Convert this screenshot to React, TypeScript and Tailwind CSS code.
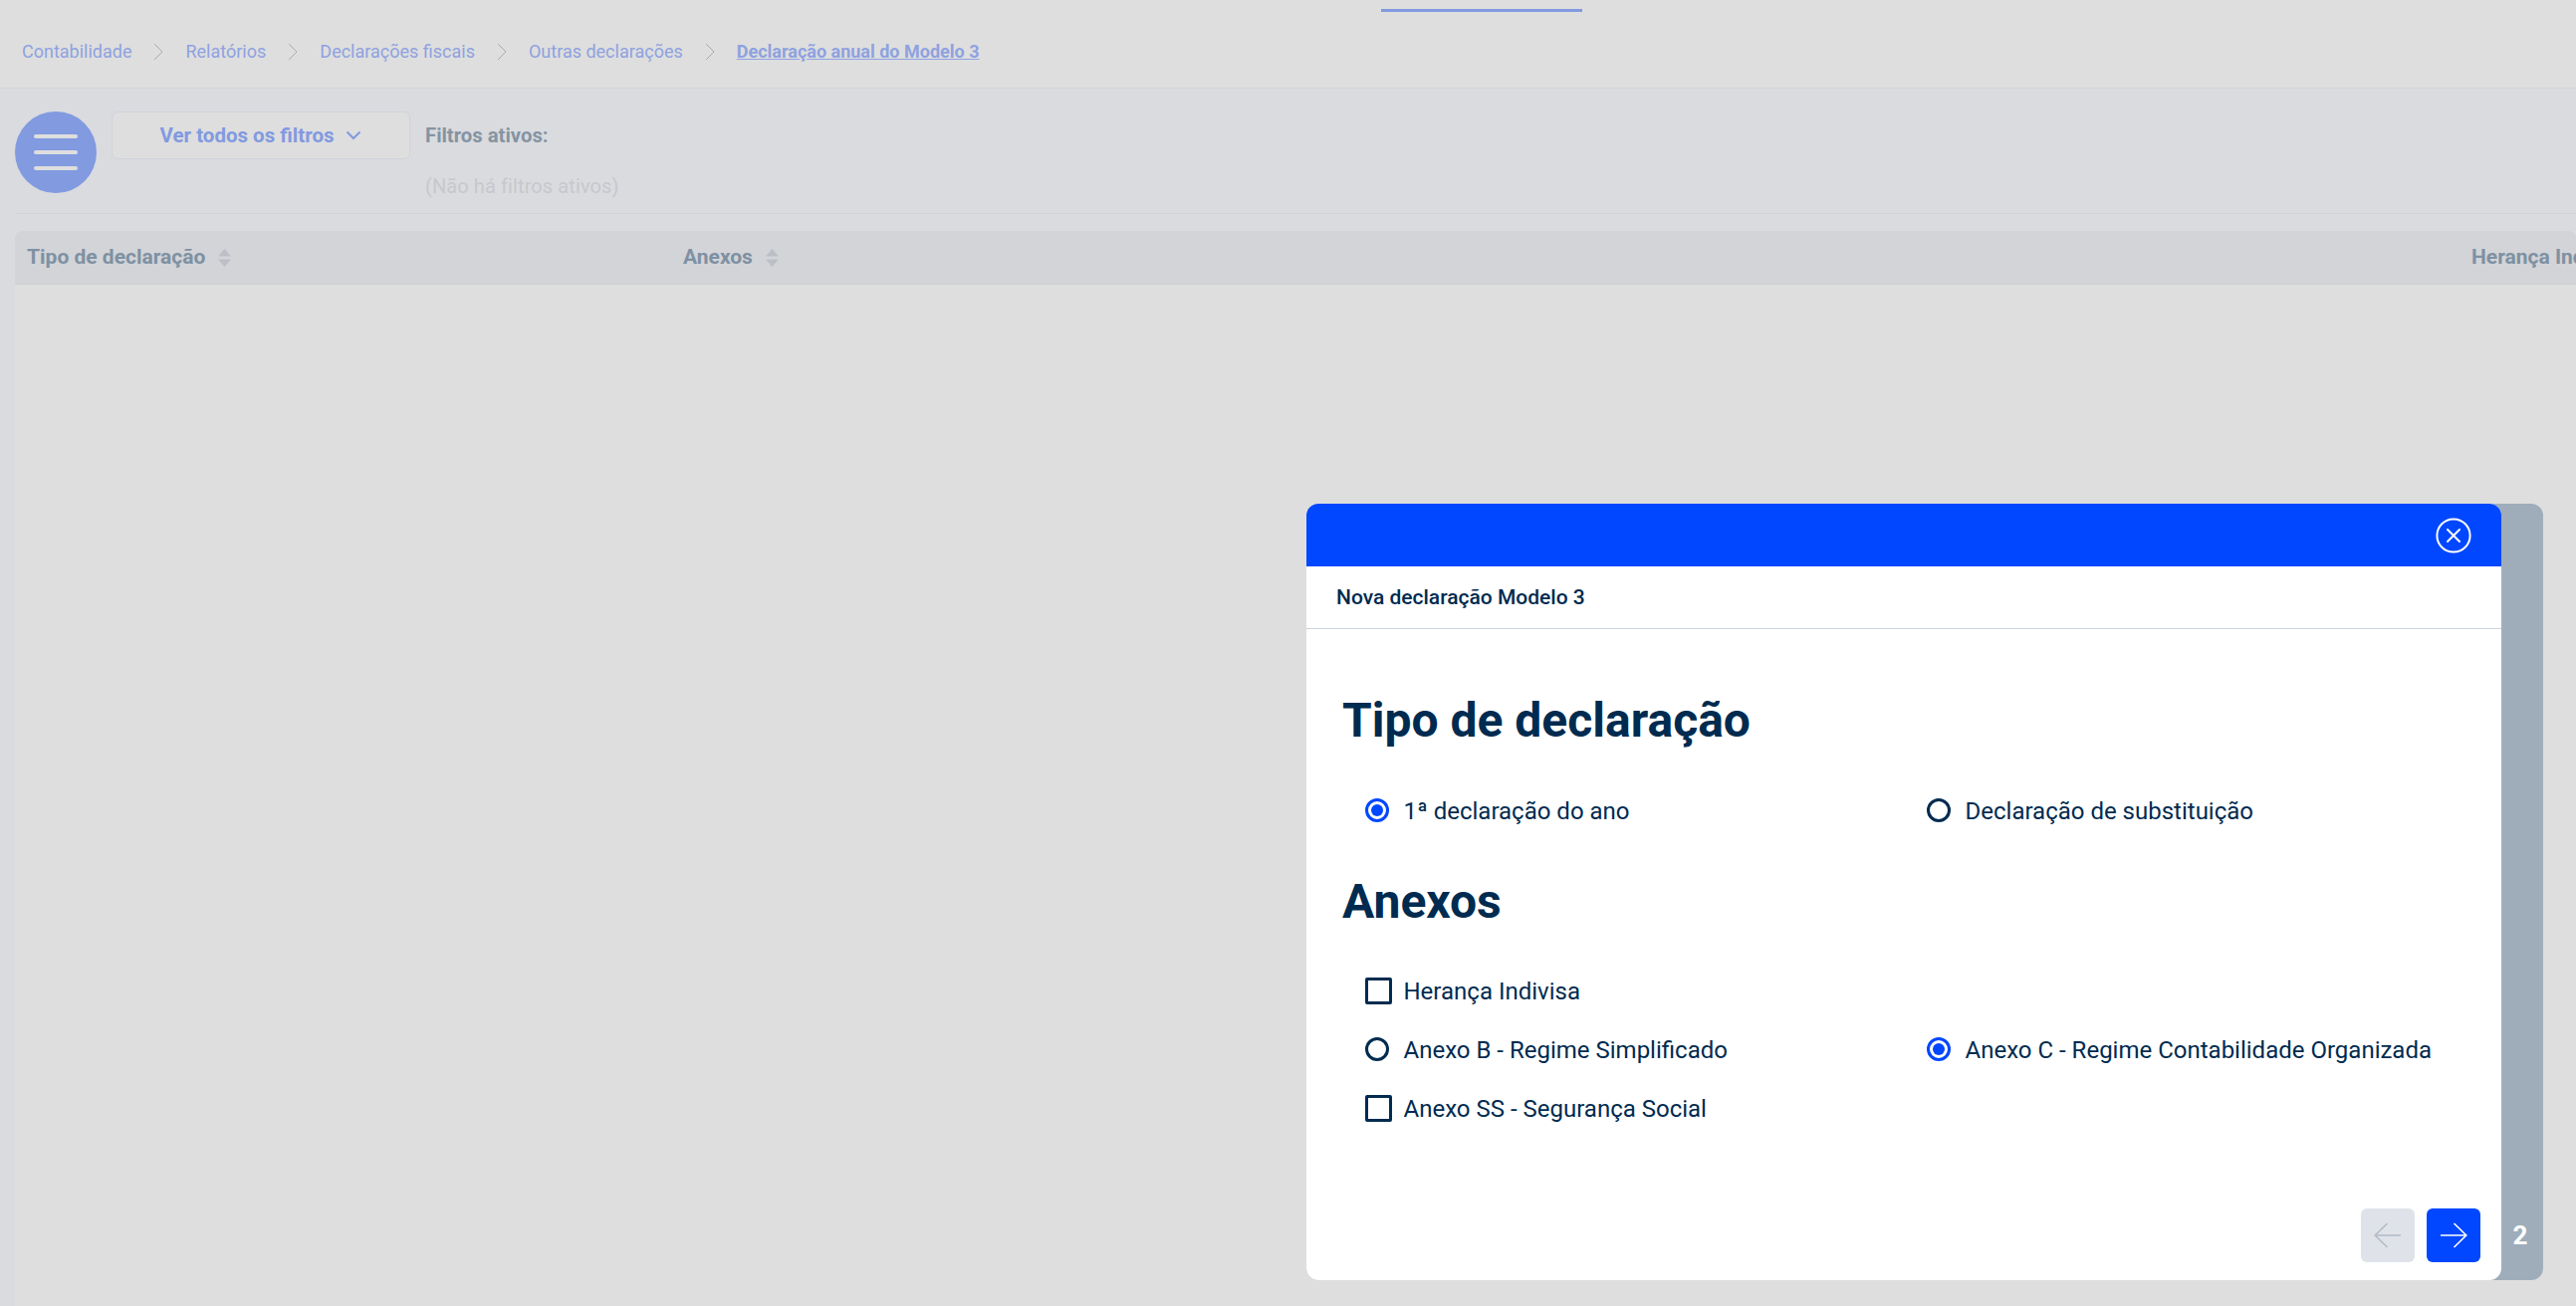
import React from "react";

const crumbs = ["Contabilidade", "Relatórios", "Declarações fiscais", "Outras declarações"];

const CrumbChevron = () => (
  <svg width="10" height="18" viewBox="0 0 10 18" fill="none" stroke="#a9abb0" strokeWidth="1" className="mx-[22px]">
    <path d="M1 1l8 8-8 8" />
  </svg>
);

const SortIcon = () => (
  <svg width="13" height="18" viewBox="0 0 13 18" fill="#bcbfc5" className="ml-[13px]">
    <path d="M6.5 0L13 7.5H0z" />
    <path d="M6.5 18L0 10.5h13z" />
  </svg>
);

const Radio = ({ checked }: { checked?: boolean }) => (
  <span
    className={`flex w-6 h-6 items-center justify-center rounded-full border-[3px] ${
      checked ? "border-[#0047ff]" : "border-[#002b50]"
    }`}
  >
    {checked && <span className="w-3 h-3 rounded-full bg-[#0047ff]" />}
  </span>
);

const Option = ({ label, type, checked }: { label: string; type: "radio" | "check"; checked?: boolean }) => (
  <div className="flex items-center h-[30px] w-[564px]">
    <span className="w-[38.5px] shrink-0">
      {type === "radio" ? (
        <Radio checked={checked} />
      ) : (
        <span className="block w-[27px] h-[27px] rounded-[2px] border-[3px] border-[#002b50]" />
      )}
    </span>
    <span className="text-2xl leading-[30px] pt-px text-[#002b50]">{label}</span>
  </div>
);

const Arrow = ({ left, color }: { left?: boolean; color: string }) => (
  <svg width="28" height="26" viewBox="0 0 28 26" fill="none" stroke={color} strokeWidth="1.6" className={left ? "rotate-180" : ""}>
    <path d="M1 13h26M14.5 1l12.3 12-12.3 12" />
  </svg>
);

export default function App() {
  return (
    <div className="relative flex flex-col h-[1312px] overflow-hidden bg-[#dadbdf] font-['Roboto',sans-serif]">
      <div className="h-[13px] pt-[9px] pl-[1387px] bg-[#dedede] shadow-[0_1px_2px_rgba(0,0,0,0.06)]">
        <div className="w-[202px] h-[3px] bg-[#819ae0]" />
      </div>

      <div className="flex items-center h-[76px] pl-[22px] pt-[2px] bg-[#dedede] border-b border-[#d2d4d8] text-lg text-[#8ea2e0]">
        {crumbs.map((c) => (
          <React.Fragment key={c}>
            <span>{c}</span>
            <CrumbChevron />
          </React.Fragment>
        ))}
        <span className="font-bold underline">Declaração anual do Modelo 3</span>
      </div>

      <div className="ml-[15px] pt-[23px] pb-[15px] flex border-b border-[#d0d2d6]">
        <div className="flex flex-col items-center justify-center gap-3 w-[82px] h-[82px] rounded-full bg-[#819ae0]">
          <span className="w-11 h-1 rounded-sm bg-[#dedede]" />
          <span className="w-11 h-1 rounded-sm bg-[#dedede]" />
          <span className="w-11 h-1 rounded-sm bg-[#dedede]" />
        </div>
        <div className="ml-[15px] flex items-center justify-center w-[300px] h-12 rounded-md border border-[#cfd3d9] bg-[#dedede]">
          <span className="text-[20.5px] font-bold text-[#819ae0]">Ver todos os filtros</span>
          <svg width="16" height="10" viewBox="0 0 16 10" fill="none" stroke="#819ae0" strokeWidth="2" className="ml-[12px]">
            <path d="M1.5 1.5L8 8l6.5-6.5" />
          </svg>
        </div>
        <div className="ml-[15px] pt-3">
          <div className="text-[20.3px] leading-6 font-bold text-[#8494a3]">Filtros ativos:</div>
          <div className="mt-[27px] text-xl leading-6 tracking-[0.1px] text-[#c7c8cc]">(Não há filtros ativos)</div>
        </div>
      </div>

      <div className="ml-[15px] mt-[17px] flex-1 flex flex-col bg-[#dedede]">
        <div className="flex items-center h-[54px] shrink-0 rounded-t-md bg-[#d3d4d8] border-b border-[#cdced2] text-[21px] font-bold text-[#7e91a3] whitespace-nowrap">
          <div className="flex items-center w-[659px] shrink-0 pl-3">
            Tipo de declaração
            <SortIcon />
          </div>
          <div className="flex items-center w-[1796px] shrink-0 pl-3">
            Anexos
            <SortIcon />
          </div>
          <div className="shrink-0 pl-3">Herança Indivisa</div>
        </div>
      </div>

      <div className="absolute left-[1312px] top-[506px] flex w-[1242px] h-[780px] rounded-xl bg-[#9fadbb]">
        <div className="flex flex-col w-[1200px] rounded-xl bg-white overflow-hidden">
          <div className="flex items-center justify-end h-[63px] pr-[30px] bg-[#0047ff]">
            <svg width="36" height="36" viewBox="0 0 36 36" fill="none" stroke="#fff" strokeWidth="2">
              <circle cx="18" cy="18" r="16.6" />
              <path d="M12 12l12 12M24 12L12 24" strokeLinecap="round" />
            </svg>
          </div>
          <div className="flex items-center h-[63px] pl-[30px] pt-px border-b border-[#ccd3db] text-[21px] font-medium text-[#002b50]">
            Nova declaração Modelo 3
          </div>
          <div className="flex-1 pt-[64px] pl-9">
            <h1 className="text-5xl leading-[56px] font-bold text-[#002b50]">Tipo de declaração</h1>
            <div className="flex mt-[47px] pl-[23px]">
              <Option type="radio" checked label="1ª declaração do ano" />
              <Option type="radio" label="Declaração de substituição" />
            </div>
            <h1 className="mt-[49px] text-5xl leading-[56px] font-bold text-[#002b50]">Anexos</h1>
            <div className="flex flex-col gap-[29px] mt-[46px] pl-[23px]">
              <Option type="check" label="Herança Indivisa" />
              <div className="flex">
                <Option type="radio" label="Anexo B - Regime Simplificado" />
                <div className="whitespace-nowrap">
                  <Option type="radio" checked label="Anexo C - Regime Contabilidade Organizada" />
                </div>
              </div>
              <Option type="check" label="Anexo SS - Segurança Social" />
            </div>
          </div>
          <div className="flex justify-end gap-3 pr-[21px] pb-[18px]">
            <button className="flex items-center justify-center w-[54px] h-[54px] rounded-md bg-[#dfe3e9]">
              <Arrow left color="#b2bbc7" />
            </button>
            <button className="flex items-center justify-center w-[54px] h-[54px] rounded-md bg-[#0047ff]">
              <Arrow color="#fff" />
            </button>
          </div>
        </div>
        <div className="flex-1 flex items-end justify-center pb-[31px] pr-1">
          <span className="text-[26px] leading-7 font-bold text-white">2</span>
        </div>
      </div>
    </div>
  );
}
